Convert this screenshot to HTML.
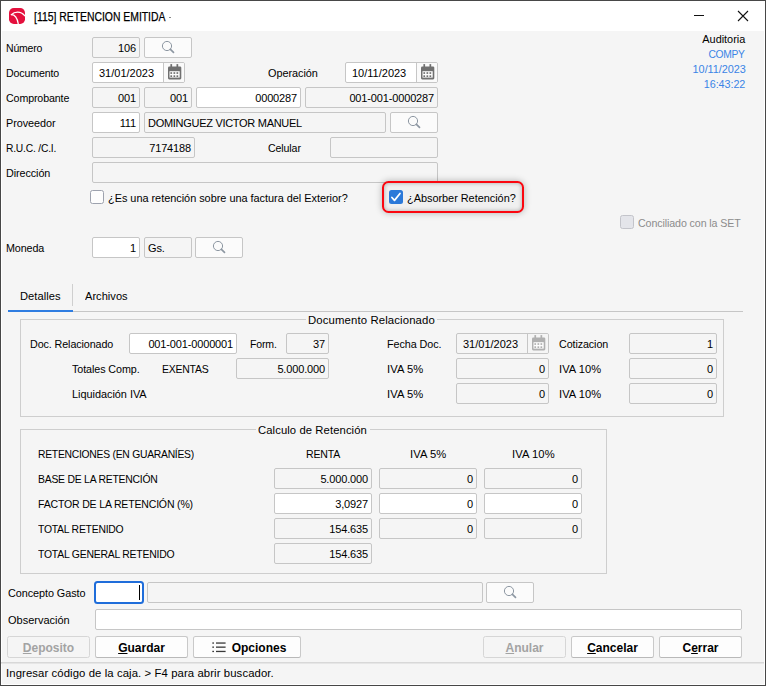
<!DOCTYPE html>
<html><head><meta charset="utf-8"><title>[115] RETENCION EMITIDA</title>
<style>
*{box-sizing:border-box;margin:0;padding:0}
html,body{width:766px;height:686px;overflow:hidden;background:#f5f5f5}
body{font-family:"Liberation Sans",sans-serif;font-size:11px;color:#000;position:relative}
.a{position:absolute}
.t{position:absolute;font-size:11px;line-height:14px;white-space:nowrap}
.f{position:absolute;height:21px;border:1px solid #c6c6c6;border-radius:2px;background:#f5f5f5;font-size:11px;line-height:21px;white-space:nowrap;overflow:hidden;padding:0 3px 0 3px;letter-spacing:-.15px}
.w{background:#fff}
.r{text-align:right}
.sb{position:absolute;height:21px;width:48px;border:1px solid #c6c6c6;border-radius:2px;background:#fbfbfb}
.sb svg{position:absolute;left:16px;top:2px}
.b{position:absolute;height:22px;border:1px solid #c9c9c9;border-bottom-color:#b9b9b9;border-radius:2.5px;background:#fdfdfd;font-weight:bold;font-size:12px;line-height:20px;padding-top:1px;text-align:center;white-space:nowrap}
.d{color:#a3a3a3;background:#f5f5f5;border-color:#d6d6d6}
.g{position:absolute;border:1px solid #cecece}
.gt{position:absolute;background:#f5f5f5;height:14px}
.cb{position:absolute;width:14px;height:14px;border:1px solid #9da2ae;border-radius:2.5px;background:#fdfdfd}
</style></head><body>
<div class="a" style="left:0;top:0;width:766px;height:31px;background:#fff"></div>
<div class="a" style="left:764px;top:0;width:1px;height:686px;background:#fff"></div>
<div class="a" style="left:1px;top:0;width:1px;height:686px;background:#fff"></div>
<div class="a" style="left:0;top:684px;width:766px;height:1px;background:#fff"></div>
<div class="a" style="left:0;top:0;width:766px;height:1px;background:#474747"></div>
<div class="a" style="left:0;top:0;width:1px;height:686px;background:#474747"></div>
<div class="a" style="left:765px;top:0;width:1px;height:686px;background:#474747"></div>
<div class="a" style="left:0;top:685px;width:766px;height:1px;background:#474747"></div>
<svg class="a" style="left:9px;top:8px" width="16" height="16" viewBox="0 0 16 16"><rect x="0" y="0" width="16" height="16" rx="4.8" fill="#e4103d"/><path d="M2.4 6.6 C5.2 3.7 11.6 2.4 15.7 7.7" stroke="#fff" stroke-width="1.3" fill="none" stroke-linecap="round"/><path d="M2.4 6.6 Q7.7 6.6 9.3 16" stroke="#fff" stroke-width="1.3" fill="none" stroke-linecap="round"/></svg>
<div class="a" style="left:694px;top:15px;width:10px;height:1px;background:#111"></div>
<svg class="a" style="left:737px;top:10px" width="12" height="12" viewBox="0 0 12 12"><path d="M1 1 L11 11 M11 1 L1 11" stroke="#111" stroke-width="1.1" fill="none"/></svg>
<div class="t" style="top:9px;left:33.52px;font-size:12px;line-height:16px;-webkit-text-stroke:.25px #000;transform:scaleX(0.8658);transform-origin:left 50%;">[115] RETENCION EMITIDA</div>
<div class="a" style="left:169px;top:17px;width:2px;height:1px;background:#888"></div>
<div class="t" style="top:41px;left:6.06px;letter-spacing:-0.198px;transform:scaleX(0.9548);transform-origin:left 50%;">Número</div>
<div class="f r" style="left:92px;top:37px;width:48px;">106</div>
<div class="sb" style="left:144px;top:37px;width:48px"><svg width="14" height="14" viewBox="0 0 14 14"><circle cx="6" cy="6" r="4.6" stroke="#8d97a2" stroke-width="1" fill="none"/><path d="M9.4 9.4 L12.5 12.3" stroke="#8d97a2" stroke-width="1.7" stroke-linecap="round"/></svg></div>
<div class="t" style="top:66px;left:6.06px;letter-spacing:-0.147px;transform:scaleX(0.9650);transform-origin:left 50%;">Documento</div>
<div class="f" style="left:92px;top:62px;width:93px;background:#fff;padding:0;letter-spacing:0"><div class="a" style="left:6px;top:0">31/01/2023</div><div class="a" style="left:70px;top:0;width:1px;height:19px;background:#c6c6c6"></div><div class="a" style="left:71px;top:0;width:20px;height:19px;background:#fafafa"></div><div class="a" style="left:74.6px;top:1px;line-height:0"><svg width="14" height="16" viewBox="0 0 14 16"><rect x="0" y="2.5" width="13.3" height="12.9" rx="1.3" fill="#707070"/><rect x="2.4" y="0.1" width="1.7" height="3.4" fill="#707070"/><rect x="8.5" y="0.1" width="1.7" height="3.4" fill="#707070"/><rect x="1.5" y="7.2" width="10.2" height="6.4" fill="#fdfdfd"/><rect x="2.4" y="8.2" width="1.7" height="1.7" fill="#707070"/><rect x="5.5" y="8.2" width="1.7" height="1.7" fill="#707070"/><rect x="8.5" y="8.2" width="1.7" height="1.7" fill="#707070"/><rect x="2.4" y="11.3" width="1.7" height="1.7" fill="#707070"/><rect x="5.5" y="11.3" width="1.7" height="1.7" fill="#707070"/><rect x="8.5" y="11.3" width="1.7" height="1.7" fill="#707070"/></svg></div></div>
<div class="t" style="top:66px;left:267.56px;letter-spacing:-0.042px;transform:scaleX(0.9888);transform-origin:left 50%;">Operación</div>
<div class="f" style="left:345px;top:62px;width:93px;background:#fff;padding:0;letter-spacing:0"><div class="a" style="left:6px;top:0">10/11/2023</div><div class="a" style="left:70px;top:0;width:1px;height:19px;background:#c6c6c6"></div><div class="a" style="left:71px;top:0;width:20px;height:19px;background:#fafafa"></div><div class="a" style="left:74.6px;top:1px;line-height:0"><svg width="14" height="16" viewBox="0 0 14 16"><rect x="0" y="2.5" width="13.3" height="12.9" rx="1.3" fill="#707070"/><rect x="2.4" y="0.1" width="1.7" height="3.4" fill="#707070"/><rect x="8.5" y="0.1" width="1.7" height="3.4" fill="#707070"/><rect x="1.5" y="7.2" width="10.2" height="6.4" fill="#fdfdfd"/><rect x="2.4" y="8.2" width="1.7" height="1.7" fill="#707070"/><rect x="5.5" y="8.2" width="1.7" height="1.7" fill="#707070"/><rect x="8.5" y="8.2" width="1.7" height="1.7" fill="#707070"/><rect x="2.4" y="11.3" width="1.7" height="1.7" fill="#707070"/><rect x="5.5" y="11.3" width="1.7" height="1.7" fill="#707070"/><rect x="8.5" y="11.3" width="1.7" height="1.7" fill="#707070"/></svg></div></div>
<div class="t" style="top:91px;left:6.06px;letter-spacing:-0.127px;transform:scaleX(0.9687);transform-origin:left 50%;">Comprobante</div>
<div class="f r" style="left:92px;top:87px;width:48px;">001</div>
<div class="f r" style="left:144px;top:87px;width:48px;">001</div>
<div class="f w r" style="left:196px;top:87px;width:105px;">0000287</div>
<div class="f r" style="left:305px;top:87px;width:133px;">001-001-0000287</div>
<div class="t" style="top:116px;left:6.06px;letter-spacing:-0.056px;transform:scaleX(0.9852);transform-origin:left 50%;">Proveedor</div>
<div class="f w r" style="left:92px;top:112px;width:48px;">111</div>
<div class="f " style="left:144px;top:112px;width:242px;letter-spacing:-.29px">DOMINGUEZ VICTOR MANUEL</div>
<div class="sb" style="left:390px;top:112px;width:48px"><svg width="14" height="14" viewBox="0 0 14 14"><circle cx="6" cy="6" r="4.6" stroke="#8d97a2" stroke-width="1" fill="none"/><path d="M9.4 9.4 L12.5 12.3" stroke="#8d97a2" stroke-width="1.7" stroke-linecap="round"/></svg></div>
<div class="t" style="top:141px;left:6.06px;letter-spacing:-0.211px;transform:scaleX(0.9333);transform-origin:left 50%;">R.U.C. /C.I.</div>
<div class="f r" style="left:92px;top:137px;width:103px;">7174188</div>
<div class="t" style="top:141px;left:267.86px;letter-spacing:-0.119px;transform:scaleX(0.9645);transform-origin:left 50%;">Celular</div>
<div class="f " style="left:330px;top:137px;width:108px;"></div>
<div class="t" style="top:166px;left:6.06px;letter-spacing:-0.074px;transform:scaleX(0.9784);transform-origin:left 50%;">Dirección</div>
<div class="f " style="left:92px;top:162px;width:346px;"></div>
<div class="cb" style="left:90px;top:190px"></div>
<div class="t" style="top:191px;left:108.06px;letter-spacing:-0.025px;transform:scaleX(0.9925);transform-origin:left 50%;">¿Es una retención sobre una factura del Exterior?</div>
<div class="a" style="left:381.5px;top:181px;width:142px;height:32px;border:2.4px solid #fb0710;border-radius:6.5px;background:#f0f0f0;box-shadow:0 0 7px rgba(0,0,0,.28),inset 0 0 4px rgba(0,0,0,.3)"></div>
<div class="a" style="left:389px;top:190px;width:14px;height:14px;border-radius:2.5px;background:#2b79d9"><svg width="14" height="14" viewBox="0 0 14 14"><path d="M2.9 7.5 L5.5 10.4 L11 3.5" stroke="#fff" stroke-width="1.7" fill="none" stroke-linecap="round" stroke-linejoin="round"/></svg></div>
<div class="t" style="top:191px;left:407.06px;letter-spacing:-0.027px;transform:scaleX(0.9927);transform-origin:left 50%;">¿Absorber Retención?</div>
<div class="cb" style="left:620px;top:215px;background:#e4e5ea;border-color:#c3c4ca"></div>
<div class="t" style="top:216px;left:638.06px;color:#8c8c8c;letter-spacing:-0.107px;transform:scaleX(0.9691);transform-origin:left 50%;">Conciliado con la SET</div>
<div class="t" style="top:241px;left:6.06px;letter-spacing:-0.104px;transform:scaleX(0.9765);transform-origin:left 50%;">Moneda</div>
<div class="f w r" style="left:92px;top:237px;width:48px;">1</div>
<div class="f " style="left:144px;top:237px;width:48px;">Gs.</div>
<div class="sb" style="left:195px;top:237px;width:48px"><svg width="14" height="14" viewBox="0 0 14 14"><circle cx="6" cy="6" r="4.6" stroke="#8d97a2" stroke-width="1" fill="none"/><path d="M9.4 9.4 L12.5 12.3" stroke="#8d97a2" stroke-width="1.7" stroke-linecap="round"/></svg></div>
<div class="t" style="top:32px;right:20.79px;letter-spacing:-0.027px;transform:scaleX(0.9917);transform-origin:right 50%;">Auditoria</div>
<div class="t" style="top:47px;right:21.52px;color:#3a84e6;letter-spacing:-0.358px;transform:scaleX(0.9342);transform-origin:right 50%;">COMPY</div>
<div class="t" style="top:62px;right:20.60px;color:#3a84e6;letter-spacing:-0.041px;transform:scaleX(0.9886);transform-origin:right 50%;">10/11/2023</div>
<div class="t" style="top:77px;right:20.63px;color:#3a84e6;letter-spacing:-0.071px;transform:scaleX(0.9801);transform-origin:right 50%;">16:43:22</div>
<div class="a" style="left:8px;top:311px;width:735px;height:1px;background:#c6c6c6"></div>
<div class="a" style="left:8px;top:310px;width:65px;height:2px;background:#2f7de1"></div>
<div class="a" style="left:72px;top:284px;width:1px;height:22px;background:#cfcfcf"></div>
<div class="t" style="top:289px;left:19.86px;letter-spacing:0.038px;transform:scaleX(1.0116);transform-origin:left 50%;">Detalles</div>
<div class="t" style="top:289px;left:84.56px;letter-spacing:0.022px;transform:scaleX(1.0061);transform-origin:left 50%;">Archivos</div>
<div class="g" style="left:20px;top:319px;width:704px;height:98px"></div>
<div class="gt" style="left:306px;top:312px;width:131px"></div>
<div class="t" style="top:313px;left:307.66px;letter-spacing:0.121px;transform:scaleX(1.0318);transform-origin:left 50%;">Documento Relacionado</div>
<div class="t" style="top:337px;left:29.96px;letter-spacing:-0.092px;transform:scaleX(0.9748);transform-origin:left 50%;">Doc. Relacionado</div>
<div class="f w r" style="left:129px;top:333px;width:108px;">001-001-0000001</div>
<div class="t" style="top:337px;left:249.56px;letter-spacing:-0.165px;transform:scaleX(0.9573);transform-origin:left 50%;">Form.</div>
<div class="f r" style="left:286px;top:333px;width:43px;">37</div>
<div class="t" style="top:337px;left:386.66px;letter-spacing:-0.074px;transform:scaleX(0.9804);transform-origin:left 50%;">Fecha Doc.</div>
<div class="f" style="left:456px;top:333px;width:93px;background:#f5f5f5;padding:0;letter-spacing:0"><div class="a" style="left:6px;top:0">31/01/2023</div><div class="a" style="left:70px;top:0;width:1px;height:19px;background:#c6c6c6"></div><div class="a" style="left:71px;top:0;width:20px;height:19px;background:#f5f5f5"></div><div class="a" style="left:74.6px;top:1px;line-height:0"><svg width="14" height="16" viewBox="0 0 14 16"><rect x="0" y="2.5" width="13.3" height="12.9" rx="1.3" fill="#b0b0b0"/><rect x="2.4" y="0.1" width="1.7" height="3.4" fill="#b0b0b0"/><rect x="8.5" y="0.1" width="1.7" height="3.4" fill="#b0b0b0"/><rect x="1.5" y="7.2" width="10.2" height="6.4" fill="#fdfdfd"/><rect x="2.4" y="8.2" width="1.7" height="1.7" fill="#b0b0b0"/><rect x="5.5" y="8.2" width="1.7" height="1.7" fill="#b0b0b0"/><rect x="8.5" y="8.2" width="1.7" height="1.7" fill="#b0b0b0"/><rect x="2.4" y="11.3" width="1.7" height="1.7" fill="#b0b0b0"/><rect x="5.5" y="11.3" width="1.7" height="1.7" fill="#b0b0b0"/><rect x="8.5" y="11.3" width="1.7" height="1.7" fill="#b0b0b0"/></svg></div></div>
<div class="t" style="top:337px;left:559.06px;letter-spacing:-0.091px;transform:scaleX(0.9736);transform-origin:left 50%;">Cotizacion</div>
<div class="f r" style="left:629px;top:333px;width:88px;">1</div>
<div class="t" style="top:362px;left:71.76px;letter-spacing:-0.084px;transform:scaleX(0.9768);transform-origin:left 50%;">Totales Comp.</div>
<div class="t" style="top:362px;left:161.86px;letter-spacing:-0.241px;transform:scaleX(0.9504);transform-origin:left 50%;">EXENTAS</div>
<div class="f r" style="left:236px;top:358px;width:93px;">5.000.000</div>
<div class="t" style="top:362px;left:386.66px;letter-spacing:0.076px;transform:scaleX(1.0195);transform-origin:left 50%;">IVA 5%</div>
<div class="f r" style="left:456px;top:358px;width:93px;">0</div>
<div class="t" style="top:362px;left:559.06px;letter-spacing:0.041px;transform:scaleX(1.0105);transform-origin:left 50%;">IVA 10%</div>
<div class="f r" style="left:629px;top:358px;width:88px;">0</div>
<div class="t" style="top:387px;left:71.76px;letter-spacing:-0.027px;transform:scaleX(0.9920);transform-origin:left 50%;">Liquidación IVA</div>
<div class="t" style="top:387px;left:386.66px;letter-spacing:0.076px;transform:scaleX(1.0195);transform-origin:left 50%;">IVA 5%</div>
<div class="f r" style="left:456px;top:383px;width:93px;">0</div>
<div class="t" style="top:387px;left:559.06px;letter-spacing:0.041px;transform:scaleX(1.0105);transform-origin:left 50%;">IVA 10%</div>
<div class="f r" style="left:629px;top:383px;width:88px;">0</div>
<div class="g" style="left:20px;top:429px;width:587px;height:145px"></div>
<div class="gt" style="left:256px;top:422px;width:114px"></div>
<div class="t" style="top:423px;left:258.26px;letter-spacing:0.086px;transform:scaleX(1.0247);transform-origin:left 50%;">Calculo de Retención</div>
<div class="t" style="top:447px;left:37.86px;letter-spacing:-0.270px;transform:scaleX(0.9396);transform-origin:left 50%;">RETENCIONES (EN GUARANÍES)</div>
<div class="t" style="top:447px;left:306.06px;letter-spacing:-0.200px;transform:scaleX(0.9592);transform-origin:left 50%;">RENTA</div>
<div class="t" style="top:447px;left:409.96px;letter-spacing:0.076px;transform:scaleX(1.0195);transform-origin:left 50%;">IVA 5%</div>
<div class="t" style="top:447px;left:511.86px;letter-spacing:0.075px;transform:scaleX(1.0191);transform-origin:left 50%;">IVA 10%</div>
<div class="t" style="top:472px;left:37.86px;letter-spacing:-0.243px;transform:scaleX(0.9450);transform-origin:left 50%;">BASE DE LA RETENCIÓN</div>
<div class="f  r" style="left:274px;top:468px;width:98px;">5.000.000</div>
<div class="f  r" style="left:379px;top:468px;width:98px;">0</div>
<div class="f  r" style="left:484px;top:468px;width:98px;">0</div>
<div class="t" style="top:497px;left:37.86px;letter-spacing:-0.185px;transform:scaleX(0.9571);transform-origin:left 50%;">FACTOR DE LA RETENCIÓN (%)</div>
<div class="f w r" style="left:274px;top:493px;width:98px;">3,0927</div>
<div class="f w r" style="left:379px;top:493px;width:98px;">0</div>
<div class="f w r" style="left:484px;top:493px;width:98px;">0</div>
<div class="t" style="top:522px;left:37.86px;letter-spacing:-0.250px;transform:scaleX(0.9447);transform-origin:left 50%;">TOTAL RETENIDO</div>
<div class="f  r" style="left:274px;top:518px;width:98px;">154.635</div>
<div class="f  r" style="left:379px;top:518px;width:98px;">0</div>
<div class="f  r" style="left:484px;top:518px;width:98px;">0</div>
<div class="t" style="top:547px;left:37.86px;letter-spacing:-0.239px;transform:scaleX(0.9475);transform-origin:left 50%;">TOTAL GENERAL RETENIDO</div>
<div class="f  r" style="left:274px;top:543px;width:98px;">154.635</div>
<div class="t" style="top:586px;left:7.96px;letter-spacing:-0.060px;transform:scaleX(0.9842);transform-origin:left 50%;">Concepto Gasto</div>
<div class="a" style="left:94px;top:581px;width:50px;height:23px;border:2px solid #1f6dda;border-radius:3.5px;background:#fff"></div>
<div class="a" style="left:139px;top:585px;width:1px;height:15px;background:#000"></div>
<div class="f " style="left:147px;top:582px;width:336px;"></div>
<div class="sb" style="left:486px;top:582px;width:48px"><svg width="14" height="14" viewBox="0 0 14 14"><circle cx="6" cy="6" r="4.6" stroke="#8d97a2" stroke-width="1" fill="none"/><path d="M9.4 9.4 L12.5 12.3" stroke="#8d97a2" stroke-width="1.7" stroke-linecap="round"/></svg></div>
<div class="t" style="top:613px;left:7.96px;letter-spacing:-0.005px;transform:scaleX(0.9986);transform-origin:left 50%;">Observación</div>
<div class="f w" style="left:95px;top:609px;width:647px;"></div>
<div class="b d" style="left:7px;top:636px;width:83px"><u>D</u>eposito</div>
<div class="b " style="left:95px;top:636px;width:93px"><u>G</u>uardar</div>
<div class="b " style="left:193px;top:636px;width:108px"><svg style="display:inline-block;vertical-align:-1px;margin:0 5.5px 0 4.5px" width="14" height="11" viewBox="0 0 14 11"><g fill="#3a3a3a"><rect x="0.3" y="0.4" width="1.7" height="1.3"/><rect x="4" y="0.4" width="9.6" height="1.3"/><rect x="0.3" y="4.5" width="1.7" height="1.3"/><rect x="4" y="4.5" width="9.6" height="1.3"/><rect x="0.3" y="8.8" width="1.7" height="1.3"/><rect x="4" y="8.8" width="9.6" height="1.3"/></g></svg>Opciones</div>
<div class="b d" style="left:483px;top:636px;width:83px"><u>A</u>nular</div>
<div class="b " style="left:571px;top:636px;width:83px"><u>C</u>ancelar</div>
<div class="b " style="left:659px;top:636px;width:83px">C<u>e</u>rrar</div>
<div class="a" style="left:1px;top:662px;width:763px;height:1px;background:#d8d8d8"></div>
<div class="a" style="left:1px;top:663px;width:763px;height:1px;background:#e6e6e6"></div>
<div class="t" style="top:666px;left:5.56px;letter-spacing:0.093px;transform:scaleX(1.0291);transform-origin:left 50%;">Ingresar código de la caja. &gt; F4 para abrir buscador.</div>
</body></html>
